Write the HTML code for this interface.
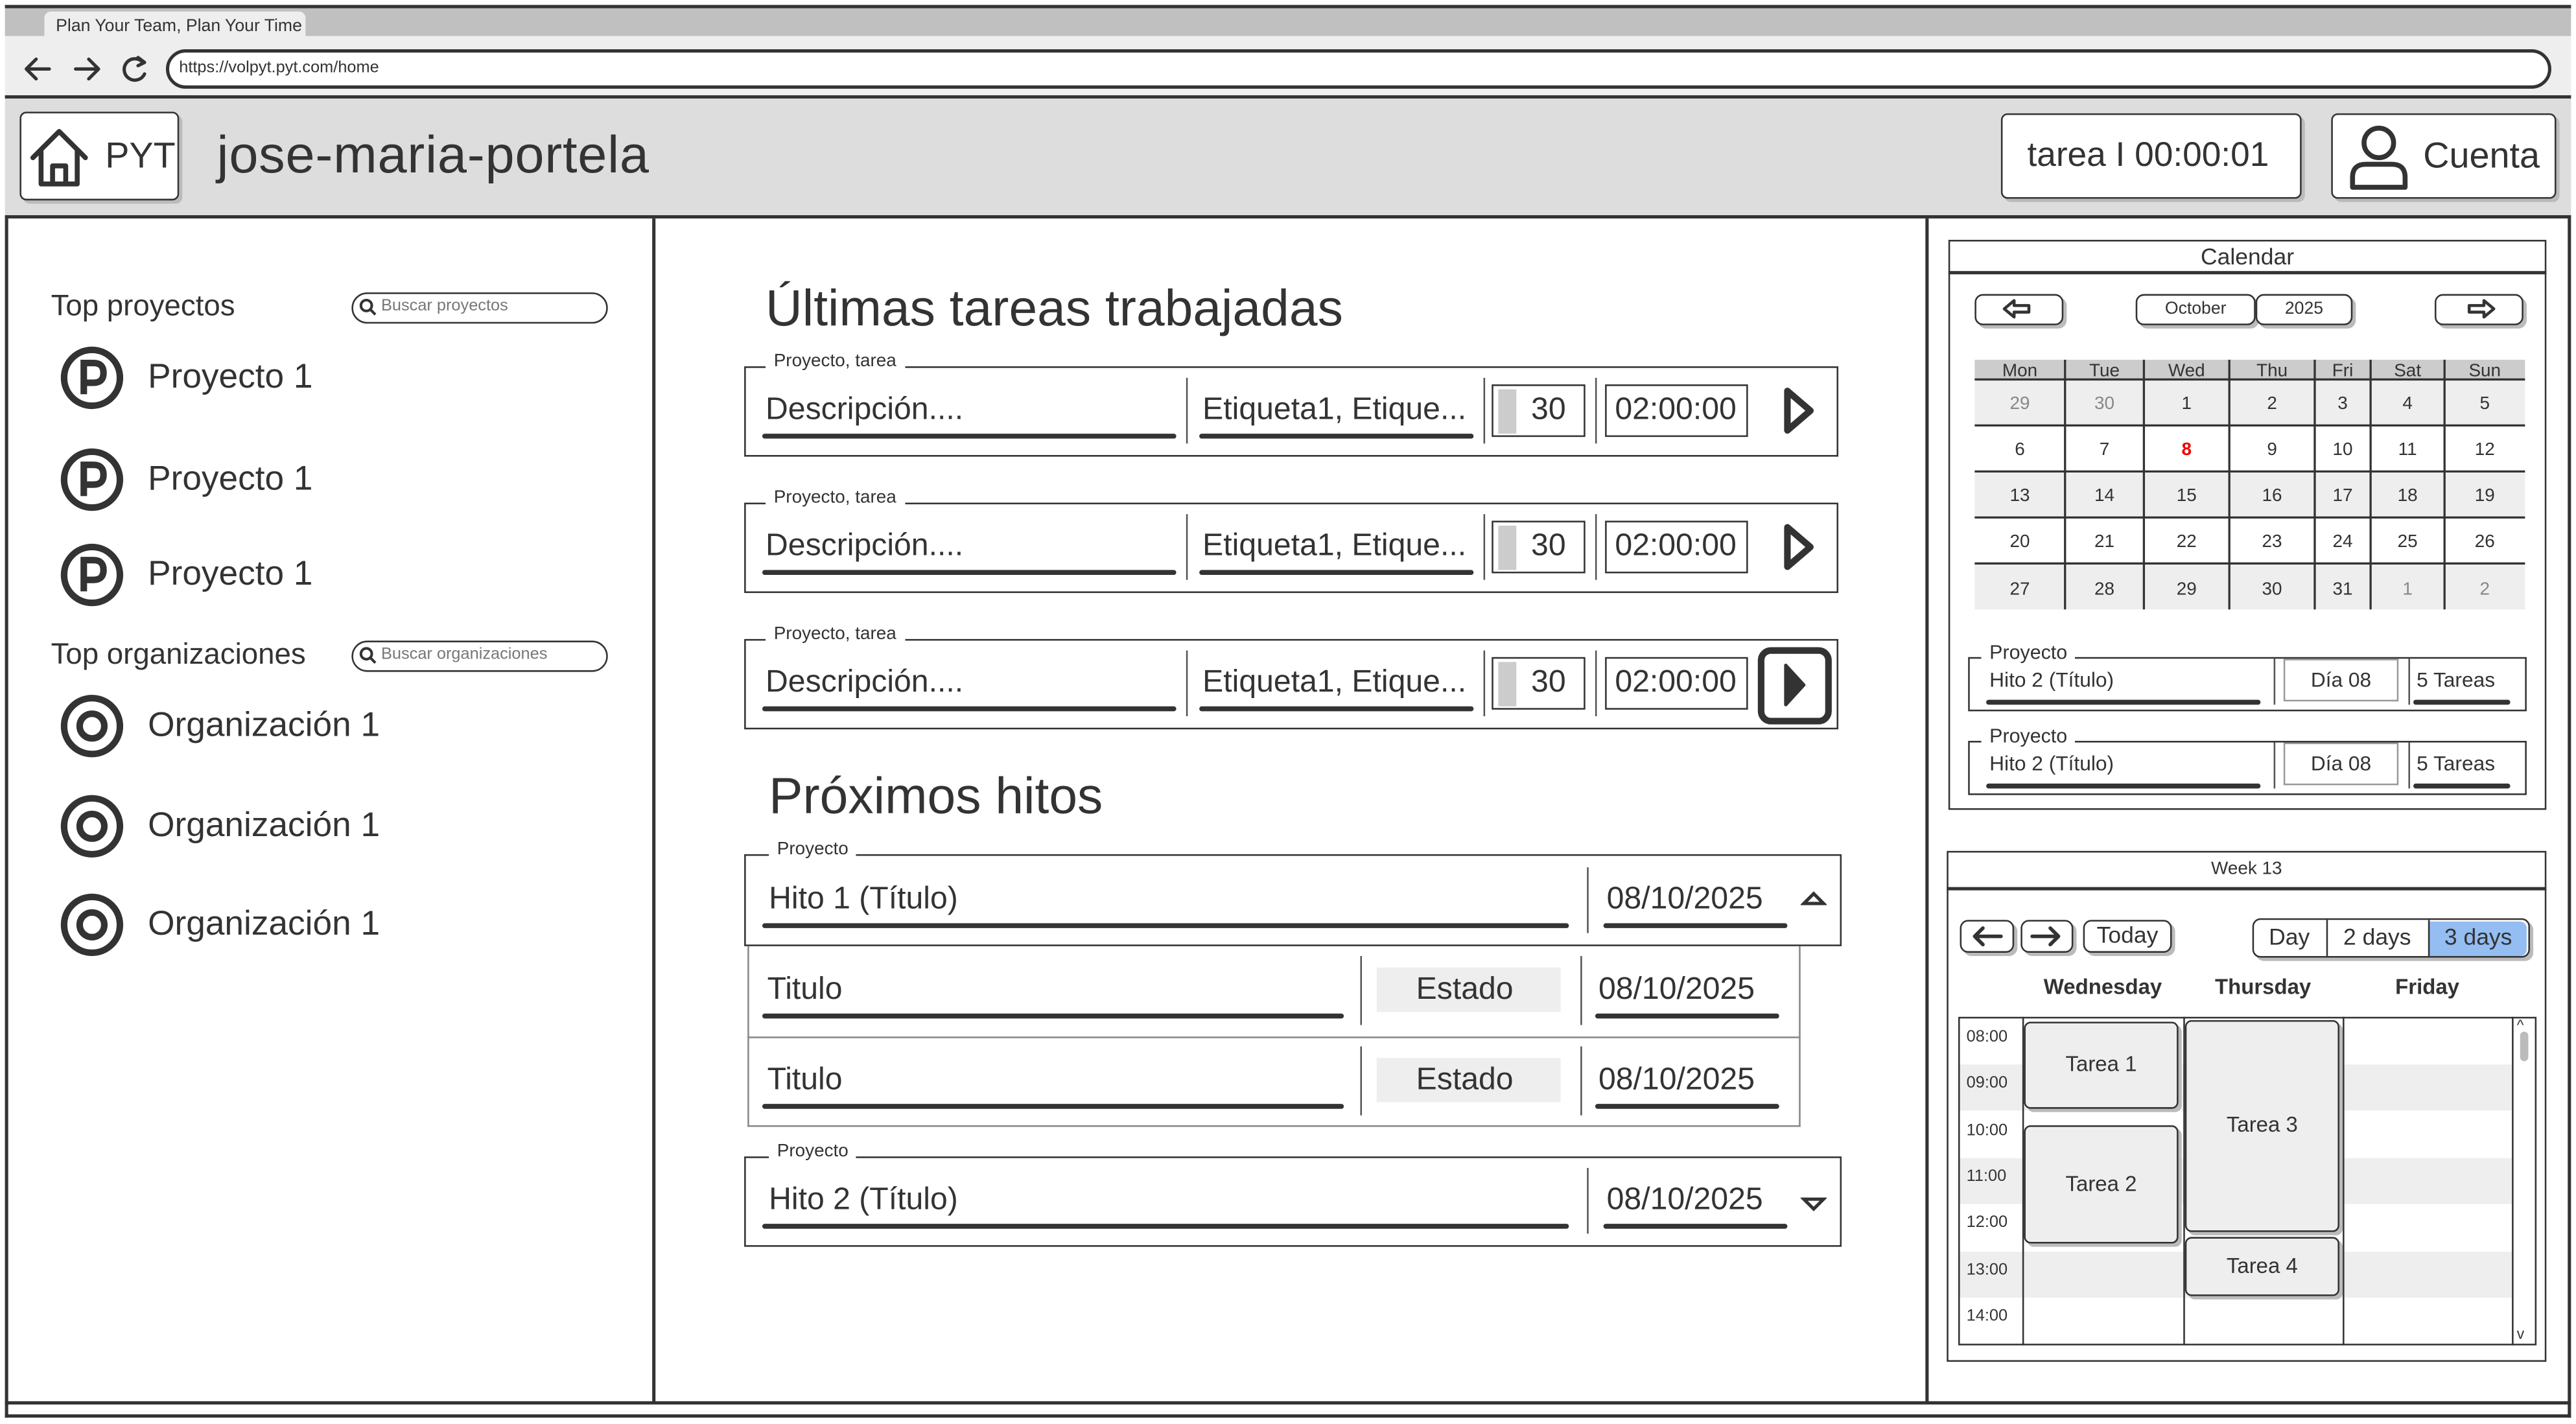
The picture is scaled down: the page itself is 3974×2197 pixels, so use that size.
<!DOCTYPE html>
<html><head><meta charset="utf-8"><style>
html,body{margin:0;padding:0;width:3974px;height:2196px;overflow:hidden;background:#fff}
#r{position:absolute;left:0;top:0;width:1568px;height:867px;transform:scale(2.5344);transform-origin:0 0;font-family:"Liberation Sans",sans-serif;color:#333}
.a{position:absolute;box-sizing:border-box}
.t{position:absolute;white-space:nowrap;line-height:1}
.b{border:1.5px solid #333}
.ul{position:absolute;height:2.5px;background:#333;border-radius:2px}
.vs{position:absolute;width:1px;background:#555}
.lbl{position:absolute;background:#fff;font-size:11px;padding:0 5px;line-height:1}
.btn{position:absolute;box-sizing:border-box;border:1.5px solid #333;border-radius:5px;background:#fff;box-shadow:2px 2px 0 #bbb;text-align:center}
.cell{position:absolute;text-align:center;font-size:11px}
</style></head><body><div id="r">
<!-- browser chrome -->
<div class="a" style="left:3px;top:3px;width:1562px;height:19px;background:#c0c0c0;border-top:2px solid #333"></div>
<div class="a" style="left:27px;top:7px;width:159px;height:16px;background:#eee;border-radius:4px 4px 0 0"></div>
<div class="t" style="left:34px;top:11px;font-size:10.5px">Plan Your Team, Plan Your Time</div>
<div class="a" style="left:3px;top:22px;width:1562px;height:38px;background:#eee;border-bottom:2px solid #333"></div>
<svg class="a" style="left:12px;top:32px" width="80" height="20"><g fill="none" stroke="#333" stroke-width="2" stroke-linecap="round" stroke-linejoin="round"><path d="M18 10 H4 M10 4 L4 10 L10 16"/><path d="M34 10 H48 M42 4 L48 10 L42 16"/><path d="M75 6 A6.5 6.5 0 1 0 76 13"/><path d="M72 3 L76 6 L72 8"/></g></svg>
<div class="a b" style="left:101px;top:30px;width:1452px;height:24px;background:#fff;border-radius:12px;border-width:2px"></div>
<div class="t" style="left:109px;top:37px;font-size:10px">https://volpyt.pyt.com/home</div>
<!-- header -->
<div class="a" style="left:3px;top:60px;width:1562px;height:73px;background:#ddd;border-bottom:2px solid #333"></div>
<div class="btn" style="left:12px;top:68px;width:97px;height:54px;border-radius:4px"></div>
<svg class="a" style="left:16px;top:76px" width="42" height="40" viewBox="0 0 42 40"><path d="M4 20 L20 4 L36 20 M9 16 V36 H31 V16 M16 36 V25 H24 V36" fill="none" stroke="#333" stroke-width="3" stroke-linejoin="round" stroke-linecap="round"/></svg>
<div class="t" style="left:64px;top:84px;font-size:22px">PYT</div>
<div class="t" style="left:132px;top:78px;font-size:32px;letter-spacing:0.3px">jose-maria-portela</div>
<div class="btn" style="left:1218px;top:69px;width:183px;height:52px;border-radius:4px"></div>
<div class="t" style="left:1234px;top:84px;font-size:21px">tarea I 00:00:01</div>
<div class="btn" style="left:1419px;top:69px;width:137px;height:52px;border-radius:4px"></div>
<svg class="a" style="left:1428px;top:74px" width="40" height="42" viewBox="0 0 40 42"><circle cx="20" cy="13" r="9" fill="none" stroke="#333" stroke-width="3"/><path d="M4 40 V34 Q4 26 12 26 H28 Q36 26 36 34 V40 Z" fill="none" stroke="#333" stroke-width="3" stroke-linejoin="round"/></svg>
<div class="t" style="left:1475px;top:84px;font-size:22px">Cuenta</div>
<!-- frame -->
<div class="a" style="left:3px;top:133px;width:2px;height:730px;background:#333"></div>
<div class="a" style="left:1563px;top:133px;width:2px;height:730px;background:#333"></div>
<div class="a" style="left:3px;top:853px;width:1562px;height:2px;background:#333"></div>
<div class="a" style="left:3px;top:861px;width:1562px;height:2px;background:#333"></div>
<div class="a" style="left:397px;top:133px;width:1.5px;height:721px;background:#333"></div>
<div class="a" style="left:1172px;top:133px;width:1.5px;height:721px;background:#333"></div>
<!-- left -->
<div class="t" style="left:31px;top:177px;font-size:18px">Top proyectos</div>
<div class="a b" style="left:214px;top:178px;width:156px;height:19px;border-radius:10px"></div>
<div class="t" style="left:232px;top:182px;font-size:10px;color:#777">Buscar proyectos</div>
<div class="t" style="left:31px;top:389px;font-size:18px">Top organizaciones</div>
<div class="a b" style="left:214px;top:390px;width:156px;height:19px;border-radius:10px"></div>
<div class="t" style="left:232px;top:394px;font-size:10px;color:#777">Buscar organizaciones</div>
<svg class="a" style="left:0;top:0" width="400" height="600">
<g fill="none" stroke="#333" stroke-width="1.6"><circle cx="223" cy="186" r="3.3"/><path d="M225.5 188.5 L228.5 191.5"/><circle cx="223" cy="398" r="3.3"/><path d="M225.5 400.5 L228.5 403.5"/></g>
<g fill="none" stroke="#333" stroke-width="4">
<circle cx="56" cy="230" r="17"/><circle cx="56" cy="292" r="17"/><circle cx="56" cy="350" r="17"/>
<circle cx="56" cy="442" r="17"/><circle cx="56" cy="503" r="17"/><circle cx="56" cy="563" r="17"/>
<circle cx="56" cy="442" r="7.5"/><circle cx="56" cy="503" r="7.5"/><circle cx="56" cy="563" r="7.5"/>
<path d="M51 240 V221 H57 Q63 221 63 227 Q63 233 57 233 H51"/><path d="M51 302 V283 H57 Q63 283 63 289 Q63 295 57 295 H51"/><path d="M51 360 V341 H57 Q63 341 63 347 Q63 353 57 353 H51"/>
</g></svg>
<div class="t" style="left:90px;top:219px;font-size:21px">Proyecto 1</div>
<div class="t" style="left:90px;top:281px;font-size:21px">Proyecto 1</div>
<div class="t" style="left:90px;top:339px;font-size:21px">Proyecto 1</div>
<div class="t" style="left:90px;top:431px;font-size:21px">Organización 1</div>
<div class="t" style="left:90px;top:492px;font-size:21px">Organización 1</div>
<div class="t" style="left:90px;top:552px;font-size:21px">Organización 1</div>
<!-- center -->
<div class="t" style="left:466px;top:172px;font-size:31px">Últimas tareas trabajadas</div>
<div class="a b" style="left:453px;top:223px;width:666px;height:55px"></div><div class="lbl" style="left:466px;top:215px">Proyecto, tarea</div>
<div class="a b" style="left:453px;top:306px;width:666px;height:55px"></div><div class="lbl" style="left:466px;top:298px">Proyecto, tarea</div>
<div class="a b" style="left:453px;top:389px;width:666px;height:55px"></div><div class="lbl" style="left:466px;top:381px">Proyecto, tarea</div>
<div class="t" style="left:466px;top:240px;font-size:19px">Descripción....</div>
<div class="t" style="left:466px;top:323px;font-size:19px">Descripción....</div>
<div class="t" style="left:466px;top:406px;font-size:19px">Descripción....</div>
<div class="ul" style="left:464px;top:264px;width:252px"></div><div class="ul" style="left:464px;top:347px;width:252px"></div><div class="ul" style="left:464px;top:430px;width:252px"></div>
<div class="vs" style="left:722px;top:230px;height:40px"></div><div class="vs" style="left:722px;top:313px;height:40px"></div><div class="vs" style="left:722px;top:396px;height:40px"></div>
<div class="t" style="left:732px;top:240px;font-size:19px">Etiqueta1, Etique...</div>
<div class="t" style="left:732px;top:323px;font-size:19px">Etiqueta1, Etique...</div>
<div class="t" style="left:732px;top:406px;font-size:19px">Etiqueta1, Etique...</div>
<div class="ul" style="left:730px;top:264px;width:167px"></div><div class="ul" style="left:730px;top:347px;width:167px"></div><div class="ul" style="left:730px;top:430px;width:167px"></div>
<div class="vs" style="left:903px;top:230px;height:40px"></div><div class="vs" style="left:903px;top:313px;height:40px"></div><div class="vs" style="left:903px;top:396px;height:40px"></div>
<div class="vs" style="left:971px;top:230px;height:40px"></div><div class="vs" style="left:971px;top:313px;height:40px"></div><div class="vs" style="left:971px;top:396px;height:40px"></div>
<div class="a b" style="left:908px;top:234px;width:57px;height:32px"></div><div class="a" style="left:912px;top:237px;width:11px;height:27px;background:#ccc"></div><div class="t" style="left:932px;top:240px;font-size:19px">30</div>
<div class="a b" style="left:908px;top:317px;width:57px;height:32px"></div><div class="a" style="left:912px;top:320px;width:11px;height:27px;background:#ccc"></div><div class="t" style="left:932px;top:323px;font-size:19px">30</div>
<div class="a b" style="left:908px;top:400px;width:57px;height:32px"></div><div class="a" style="left:912px;top:403px;width:11px;height:27px;background:#ccc"></div><div class="t" style="left:932px;top:406px;font-size:19px">30</div>
<div class="a b" style="left:977px;top:234px;width:87px;height:32px"></div><div class="t" style="left:983px;top:240px;font-size:19px">02:00:00</div>
<div class="a b" style="left:977px;top:317px;width:87px;height:32px"></div><div class="t" style="left:983px;top:323px;font-size:19px">02:00:00</div>
<div class="a b" style="left:977px;top:400px;width:87px;height:32px"></div><div class="t" style="left:983px;top:406px;font-size:19px">02:00:00</div>
<svg class="a" style="left:1068px;top:230px" width="52" height="220" viewBox="0 0 52 220">
<path d="M20 8 L34 20 L20 32 Z" fill="none" stroke="#333" stroke-width="4" stroke-linejoin="round"/>
<path d="M20 91 L34 103 L20 115 Z" fill="none" stroke="#333" stroke-width="4" stroke-linejoin="round"/>
<rect x="4" y="166" width="41" height="43" rx="6" fill="none" stroke="#333" stroke-width="4"/>
<path d="M19 175 L30 187 L19 199 Z" fill="#333" stroke="#333" stroke-width="2" stroke-linejoin="round"/>
</svg>
<!-- hitos -->
<div class="t" style="left:468px;top:469px;font-size:31px">Próximos hitos</div>
<div class="a b" style="left:453px;top:520px;width:668px;height:56px"></div><div class="lbl" style="left:468px;top:512px">Proyecto</div>
<div class="t" style="left:468px;top:538px;font-size:19px">Hito 1 (Título)</div>
<div class="ul" style="left:464px;top:562px;width:491px"></div>
<div class="vs" style="left:966px;top:528px;height:40px"></div>
<div class="t" style="left:978px;top:538px;font-size:19px">08/10/2025</div>
<div class="ul" style="left:976px;top:562px;width:112px"></div>
<svg class="a" style="left:1096px;top:541px" width="16" height="12"><path d="M2 9 L8 3 L14 9 Z" fill="none" stroke="#333" stroke-width="2"/></svg>
<div class="a" style="left:455px;top:576px;width:641px;height:110px;border:1px solid #888;border-top:none"></div>
<div class="a" style="left:455px;top:631px;width:641px;height:1px;background:#888"></div>
<div class="t" style="left:467px;top:593px;font-size:19px">Titulo</div>
<div class="t" style="left:467px;top:648px;font-size:19px">Titulo</div>
<div class="ul" style="left:464px;top:617px;width:354px"></div><div class="ul" style="left:464px;top:672px;width:354px"></div>
<div class="vs" style="left:828px;top:582px;height:42px"></div><div class="vs" style="left:828px;top:637px;height:42px"></div>
<div class="a" style="left:838px;top:589px;width:112px;height:27px;background:#eee"></div><div class="t" style="left:862px;top:593px;font-size:19px">Estado</div>
<div class="a" style="left:838px;top:644px;width:112px;height:27px;background:#eee"></div><div class="t" style="left:862px;top:648px;font-size:19px">Estado</div>
<div class="vs" style="left:962px;top:582px;height:42px"></div><div class="vs" style="left:962px;top:637px;height:42px"></div>
<div class="t" style="left:973px;top:593px;font-size:19px">08/10/2025</div>
<div class="t" style="left:973px;top:648px;font-size:19px">08/10/2025</div>
<div class="ul" style="left:971px;top:617px;width:112px"></div><div class="ul" style="left:971px;top:672px;width:112px"></div>
<div class="a b" style="left:453px;top:704px;width:668px;height:55px"></div><div class="lbl" style="left:468px;top:696px">Proyecto</div>
<div class="t" style="left:468px;top:721px;font-size:19px">Hito 2 (Título)</div>
<div class="ul" style="left:464px;top:745px;width:491px"></div>
<div class="vs" style="left:966px;top:711px;height:40px"></div>
<div class="t" style="left:978px;top:721px;font-size:19px">08/10/2025</div>
<div class="ul" style="left:976px;top:745px;width:112px"></div>
<svg class="a" style="left:1096px;top:727px" width="16" height="12"><path d="M2 3 L8 9 L14 3 Z" fill="none" stroke="#333" stroke-width="2"/></svg>
<!-- calendar -->
<div class="a b" style="left:1186px;top:146px;width:364px;height:347px"></div>
<div class="a" style="left:1186px;top:165px;width:364px;height:1.5px;background:#333"></div>
<div class="t" style="left:1186px;top:149px;width:364px;text-align:center;font-size:14px">Calendar</div>
<div class="btn" style="left:1202px;top:179px;width:54px;height:19px"></div>
<svg class="a" style="left:1218px;top:181px" width="20" height="14"><path d="M2 7 L8 2 V5 H17 V9 H8 V12 Z" fill="none" stroke="#333" stroke-width="1.8" stroke-linejoin="round"/></svg>
<div class="btn" style="left:1300px;top:179px;width:73px;height:19px;font-size:10.5px;line-height:16px">October</div>
<div class="btn" style="left:1373px;top:179px;width:59px;height:19px;font-size:10.5px;line-height:16px">2025</div>
<div class="btn" style="left:1482px;top:179px;width:54px;height:19px"></div>
<svg class="a" style="left:1500px;top:181px" width="20" height="14"><path d="M18 7 L12 2 V5 H3 V9 H12 V12 Z" fill="none" stroke="#333" stroke-width="1.8" stroke-linejoin="round"/></svg>
<div class="a" style="left:1202px;top:219px;width:335px;height:12px;background:#ccc"></div>
<div class="a" style="left:1202px;top:231px;width:335px;height:28px;background:#eee"></div>
<div class="a" style="left:1202px;top:287px;width:335px;height:28px;background:#eee"></div>
<div class="a" style="left:1202px;top:343px;width:335px;height:28px;background:#eee"></div>
<svg class="a" style="left:0;top:0" width="1568" height="400"><g stroke="#333" stroke-width="1.3">
<line x1="1202" y1="231" x2="1537" y2="231"/><line x1="1202" y1="259" x2="1537" y2="259"/><line x1="1202" y1="287" x2="1537" y2="287"/><line x1="1202" y1="315" x2="1537" y2="315"/><line x1="1202" y1="343" x2="1537" y2="343"/>
<line x1="1257" y1="219" x2="1257" y2="371"/><line x1="1305" y1="219" x2="1305" y2="371"/><line x1="1357" y1="219" x2="1357" y2="371"/><line x1="1409" y1="219" x2="1409" y2="371"/><line x1="1443" y1="219" x2="1443" y2="371"/><line x1="1488" y1="219" x2="1488" y2="371"/>
</g></svg>
<div class="cell" style="left:1202px;top:220px;width:55px">Mon</div><div class="cell" style="left:1257px;top:220px;width:48px">Tue</div><div class="cell" style="left:1305px;top:220px;width:52px">Wed</div><div class="cell" style="left:1357px;top:220px;width:52px">Thu</div><div class="cell" style="left:1409px;top:220px;width:34px">Fri</div><div class="cell" style="left:1443px;top:220px;width:45px">Sat</div><div class="cell" style="left:1488px;top:220px;width:49px">Sun</div>
<div class="cell" style="left:1202px;top:240px;width:55px;color:#888">29</div><div class="cell" style="left:1257px;top:240px;width:48px;color:#888">30</div><div class="cell" style="left:1305px;top:240px;width:52px">1</div><div class="cell" style="left:1357px;top:240px;width:52px">2</div><div class="cell" style="left:1409px;top:240px;width:34px">3</div><div class="cell" style="left:1443px;top:240px;width:45px">4</div><div class="cell" style="left:1488px;top:240px;width:49px">5</div>
<div class="cell" style="left:1202px;top:268px;width:55px">6</div><div class="cell" style="left:1257px;top:268px;width:48px">7</div><div class="cell" style="left:1305px;top:268px;width:52px;color:#e00;font-weight:bold">8</div><div class="cell" style="left:1357px;top:268px;width:52px">9</div><div class="cell" style="left:1409px;top:268px;width:34px">10</div><div class="cell" style="left:1443px;top:268px;width:45px">11</div><div class="cell" style="left:1488px;top:268px;width:49px">12</div>
<div class="cell" style="left:1202px;top:296px;width:55px">13</div><div class="cell" style="left:1257px;top:296px;width:48px">14</div><div class="cell" style="left:1305px;top:296px;width:52px">15</div><div class="cell" style="left:1357px;top:296px;width:52px">16</div><div class="cell" style="left:1409px;top:296px;width:34px">17</div><div class="cell" style="left:1443px;top:296px;width:45px">18</div><div class="cell" style="left:1488px;top:296px;width:49px">19</div>
<div class="cell" style="left:1202px;top:324px;width:55px">20</div><div class="cell" style="left:1257px;top:324px;width:48px">21</div><div class="cell" style="left:1305px;top:324px;width:52px">22</div><div class="cell" style="left:1357px;top:324px;width:52px">23</div><div class="cell" style="left:1409px;top:324px;width:34px">24</div><div class="cell" style="left:1443px;top:324px;width:45px">25</div><div class="cell" style="left:1488px;top:324px;width:49px">26</div>
<div class="cell" style="left:1202px;top:353px;width:55px">27</div><div class="cell" style="left:1257px;top:353px;width:48px">28</div><div class="cell" style="left:1305px;top:353px;width:52px">29</div><div class="cell" style="left:1357px;top:353px;width:52px">30</div><div class="cell" style="left:1409px;top:353px;width:34px">31</div><div class="cell" style="left:1443px;top:353px;width:45px;color:#888">1</div><div class="cell" style="left:1488px;top:353px;width:49px;color:#888">2</div>
<!-- cal hitos -->
<div class="a b" style="left:1198px;top:400px;width:340px;height:33px"></div><div class="lbl" style="left:1206px;top:391px;font-size:12px">Proyecto</div>
<div class="t" style="left:1211px;top:408px;font-size:12.5px">Hito 2 (Título)</div><div class="ul" style="left:1209px;top:426px;width:167px"></div>
<div class="vs" style="left:1384px;top:401px;height:28px"></div>
<div class="a" style="left:1390px;top:401px;width:70px;height:26px;border:1.5px solid #999"></div><div class="t" style="left:1390px;top:408px;width:70px;text-align:center;font-size:12.5px">Día 08</div>
<div class="vs" style="left:1466px;top:401px;height:28px"></div>
<div class="t" style="left:1471px;top:408px;font-size:12.5px">5 Tareas</div><div class="ul" style="left:1469px;top:426px;width:59px"></div>
<div class="a b" style="left:1198px;top:451px;width:340px;height:33px"></div><div class="lbl" style="left:1206px;top:442px;font-size:12px">Proyecto</div>
<div class="t" style="left:1211px;top:459px;font-size:12.5px">Hito 2 (Título)</div><div class="ul" style="left:1209px;top:477px;width:167px"></div>
<div class="vs" style="left:1384px;top:452px;height:28px"></div>
<div class="a" style="left:1390px;top:452px;width:70px;height:26px;border:1.5px solid #999"></div><div class="t" style="left:1390px;top:459px;width:70px;text-align:center;font-size:12.5px">Día 08</div>
<div class="vs" style="left:1466px;top:452px;height:28px"></div>
<div class="t" style="left:1471px;top:459px;font-size:12.5px">5 Tareas</div><div class="ul" style="left:1469px;top:477px;width:59px"></div>
<!-- week -->
<div class="a b" style="left:1185px;top:518px;width:365px;height:311px"></div>
<div class="a" style="left:1185px;top:540px;width:365px;height:1.5px;background:#333"></div>
<div class="t" style="left:1185px;top:524px;width:365px;text-align:center;font-size:11px">Week 13</div>
<div class="btn" style="left:1193px;top:560px;width:33px;height:20px"></div>
<div class="btn" style="left:1230px;top:560px;width:32px;height:20px"></div>
<svg class="a" style="left:1193px;top:560px" width="70" height="20"><g fill="none" stroke="#333" stroke-width="2.2" stroke-linecap="round" stroke-linejoin="round"><path d="M25 10 H9 M14 5 L9 10 L14 15"/><path d="M44 10 H60 M55 5 L60 10 L55 15"/></g></svg>
<div class="btn" style="left:1268px;top:560px;width:54px;height:20px;font-size:14px;line-height:17px">Today</div>
<div class="btn" style="left:1371px;top:559px;width:169px;height:24px;overflow:hidden"></div>
<div class="a" style="left:1478px;top:560.5px;width:60px;height:21px;background:#94bdf2;border-radius:0 4px 4px 0"></div>
<div class="a" style="left:1416px;top:560px;width:1px;height:22px;background:#333"></div>
<div class="a" style="left:1478px;top:560px;width:1px;height:22px;background:#333"></div>
<div class="t" style="left:1371px;top:563px;width:45px;text-align:center;font-size:14px">Day</div>
<div class="t" style="left:1416px;top:563px;width:62px;text-align:center;font-size:14px">2 days</div>
<div class="t" style="left:1478px;top:563px;width:61px;text-align:center;font-size:14px">3 days</div>
<div class="t" style="left:1231px;top:594px;width:98px;text-align:center;font-size:13px;font-weight:bold">Wednesday</div>
<div class="t" style="left:1329px;top:594px;width:97px;text-align:center;font-size:13px;font-weight:bold">Thursday</div>
<div class="t" style="left:1426px;top:594px;width:103px;text-align:center;font-size:13px;font-weight:bold">Friday</div>
<div class="a" style="left:1192px;top:648px;width:337px;height:28px;background:#eee"></div>
<div class="a" style="left:1192px;top:705px;width:337px;height:28px;background:#eee"></div>
<div class="a" style="left:1192px;top:762px;width:337px;height:28px;background:#eee"></div>
<div class="a b" style="left:1192px;top:619px;width:352px;height:200px"></div>
<div class="a" style="left:1231px;top:619px;width:1.3px;height:200px;background:#333"></div>
<div class="a" style="left:1329px;top:619px;width:1.3px;height:200px;background:#333"></div>
<div class="a" style="left:1426px;top:619px;width:1.3px;height:200px;background:#333"></div>
<div class="a" style="left:1529px;top:619px;width:1.3px;height:200px;background:#333"></div>
<div class="a" style="left:1534px;top:628px;width:5px;height:18px;background:#bbb;border-radius:3px"></div>
<div class="t" style="left:1532px;top:620px;font-size:9px">^</div>
<div class="t" style="left:1532px;top:808px;font-size:9px">v</div>
<div class="t" style="left:1197px;top:627px;font-size:10px">08:00</div>
<div class="t" style="left:1197px;top:655px;font-size:10px">09:00</div>
<div class="t" style="left:1197px;top:684px;font-size:10px">10:00</div>
<div class="t" style="left:1197px;top:712px;font-size:10px">11:00</div>
<div class="t" style="left:1197px;top:740px;font-size:10px">12:00</div>
<div class="t" style="left:1197px;top:769px;font-size:10px">13:00</div>
<div class="t" style="left:1197px;top:797px;font-size:10px">14:00</div>
<div class="btn" style="left:1232px;top:622px;width:94px;height:53px;background:#eee;border-radius:4px;font-size:13px;line-height:50px">Tarea 1</div>
<div class="btn" style="left:1232px;top:685px;width:94px;height:72px;background:#eee;border-radius:4px;font-size:13px;line-height:69px">Tarea 2</div>
<div class="btn" style="left:1330px;top:621px;width:94px;height:129px;background:#eee;border-radius:4px;font-size:13px;line-height:126px">Tarea 3</div>
<div class="btn" style="left:1330px;top:753px;width:94px;height:36px;background:#eee;border-radius:4px;font-size:13px;line-height:33px">Tarea 4</div>
</div></body></html>
